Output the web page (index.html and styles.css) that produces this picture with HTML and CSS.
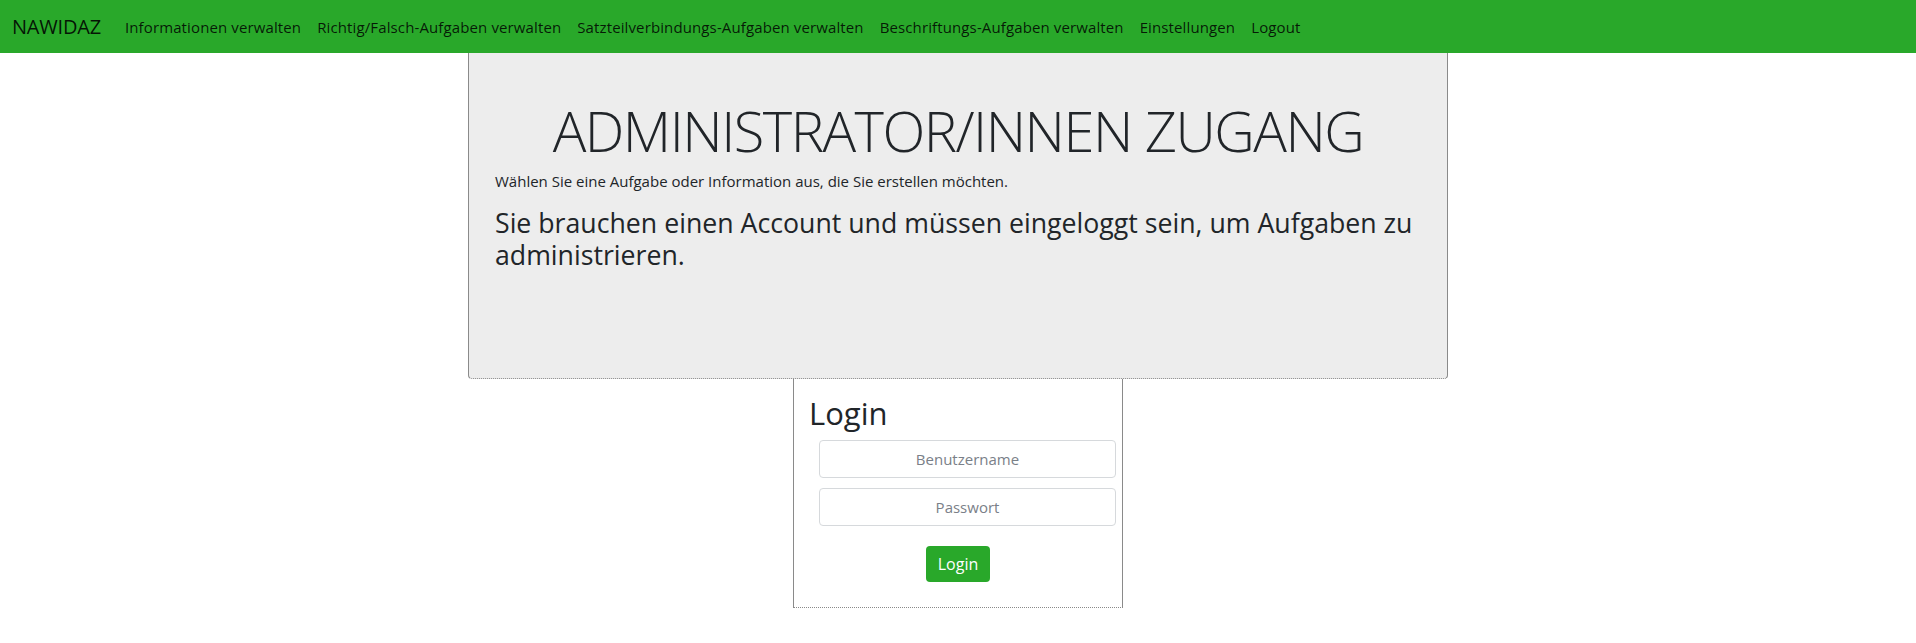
FILE: index.html
```html
<!DOCTYPE html>
<html lang="de">
<head>
<meta charset="utf-8">
<title>NAWIDAZ – Administrator/innen Zugang</title>
<link rel="stylesheet" href="styles.css">
</head>
<body>
<nav class="navbar">
  <a class="brand" href="#">NAWIDAZ</a>
  <ul class="nav">
    <li><a class="nav-link" href="#">Informationen verwalten</a></li>
    <li><a class="nav-link" href="#">Richtig/Falsch-Aufgaben verwalten</a></li>
    <li><a class="nav-link" href="#">Satzteilverbindungs-Aufgaben verwalten</a></li>
    <li><a class="nav-link" href="#">Beschriftungs-Aufgaben verwalten</a></li>
    <li><a class="nav-link" href="#">Einstellungen</a></li>
    <li><a class="nav-link" href="#">Logout</a></li>
  </ul>
</nav>
<main class="page">
  <section class="jumbotron">
    <h1 class="display">ADMINISTRATOR/INNEN ZUGANG</h1>
    <p class="intro">Wählen Sie eine Aufgabe oder Information aus, die Sie erstellen möchten.</p>
    <h3 class="notice">Sie brauchen einen Account und müssen eingeloggt sein, um Aufgaben zu administrieren.</h3>
  </section>
  <section class="login-box">
    <h2 class="login-title">Login</h2>
    <form class="login-form">
      <div class="fields">
        <input class="field" type="text" placeholder="Benutzername">
        <input class="field" type="password" placeholder="Passwort">
      </div>
      <button class="btn-login" type="button">Login</button>
    </form>
  </section>
</main>
</body>
</html>
```
FILE: styles.css
```css
* { box-sizing: border-box; }

html, body {
  margin: 0;
  padding: 0;
  background: #fff;
  font-family: "Open Sans", "Noto Sans", "DejaVu Sans", sans-serif;
  color: #212529;
}

.navbar {
  display: flex;
  align-items: center;
  height: 53px;
  padding: 0 12px;
  background: #29a82a;
}

.brand {
  font-size: 20px;
  color: rgba(0, 0, 0, 0.88);
  text-decoration: none;
  margin-right: 16px;
  letter-spacing: -0.2px;
}

.nav {
  display: flex;
  list-style: none;
  margin: 0;
  padding: 0;
}

.nav-link {
  display: block;
  padding: 0 8px;
  font-size: 15px;
  letter-spacing: 0.12px;
  color: rgba(0, 0, 0, 0.85);
  text-decoration: none;
}

.page {
  display: flex;
  flex-direction: column;
  align-items: center;
}

.jumbotron {
  width: 980px;
  height: 326px;
  padding: 44px 26px 0 26px;
  background: #ededed;
  border-left: 1px solid #8a8a8a;
  border-right: 1px solid #8a8a8a;
  border-bottom: 1px dotted #8a8a8a;
  border-radius: 0 0 4px 4px;
}

.display {
  margin: 0 0 7px 0;
  font-size: 56px;
  font-weight: 300;
  line-height: 1.2;
  text-align: center;
  letter-spacing: -1.5px;
  color: #212529;
}

.intro {
  margin: 0 0 16px 0;
  font-size: 15px;
  line-height: 20px;
}

.notice {
  margin: 0;
  font-size: 26.7px;
  font-weight: 400;
  line-height: 32px;
  letter-spacing: 0;
}

.login-box {
  width: 330px;
  padding: 16px 15px 25px 15px;
  border-left: 1px solid #8a8a8a;
  border-right: 1px solid #8a8a8a;
  border-bottom: 1px dotted #8a8a8a;
}

.login-title {
  margin: 0 0 8px 0;
  font-size: 31px;
  font-weight: 400;
  line-height: 1.2;
}

.login-form {
  display: flex;
  flex-direction: column;
  align-items: center;
}

.fields {
  align-self: stretch;
  display: flex;
  flex-direction: column;
  gap: 10px;
  margin: 0 -9px 0 10px;
}

.field {
  height: 38px;
  padding: 0 12px;
  border: 1px solid #d6d9dc;
  border-radius: 4px;
  font-family: inherit;
  font-size: 15px;
  text-align: center;
  color: #495057;
}

.field::placeholder {
  color: #7a8088;
}

.btn-login {
  margin-top: 20px;
  height: 36px;
  padding: 0 12px;
  border: none;
  border-radius: 4px;
  background: #29a82a;
  color: #fff;
  font-family: inherit;
  font-size: 16px;
}
```
